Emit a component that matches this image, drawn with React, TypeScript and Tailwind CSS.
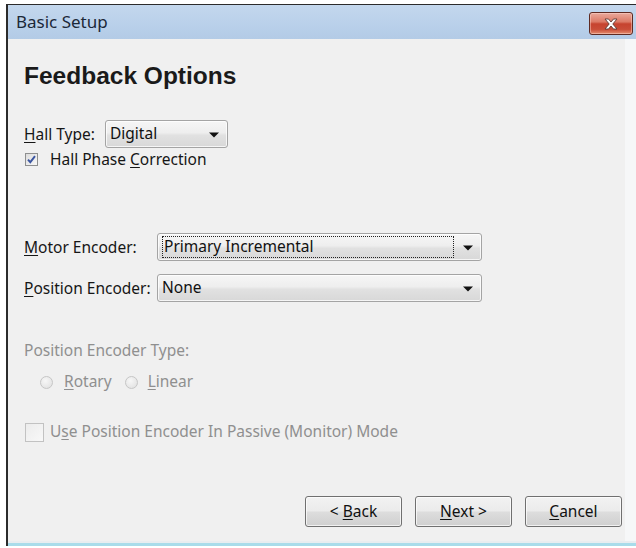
import React from "react";

const ui = "font-['Noto_Sans',sans-serif]";

function Key({ children }: { children: React.ReactNode }) {
  return <span className="underline decoration-1 underline-offset-[2px]">{children}</span>;
}

function DownArrow() {
  return (
    <svg width="10" height="6" viewBox="0 0 10 6" className="block">
      <path d="M0 0.5h10L5 5.5z" fill="#111" />
    </svg>
  );
}

function Combo({
  value,
  sizeClass,
  focused = false,
}: {
  value: string;
  sizeClass: string;
  focused?: boolean;
}) {
  return (
    <div
      className={`${sizeClass} h-[28px] shrink-0 flex items-stretch rounded-[3px] border border-[#a4a4a4] bg-[linear-gradient(#f6f6f6,#eeeeee_45%,#e1e1e1_55%,#d8d8d8)] shadow-[inset_0_0_0_1px_rgba(255,255,255,0.75)]`}
    >
      {focused ? (
        <div className="flex-1 my-[2px] ml-[4px] flex items-center border border-dotted border-[#222] pl-[1px] text-[15.5px] text-[#111]">
          {value}
        </div>
      ) : (
        <div className="flex-1 flex items-center pl-[4px] text-[15.5px] text-[#111]">{value}</div>
      )}
      <div className="w-[27px] flex items-center justify-center pt-[1px]">
        <DownArrow />
      </div>
    </div>
  );
}

function CheckBox({ checked, disabled, sizeClass }: { checked?: boolean; disabled?: boolean; sizeClass: string }) {
  return (
    <div
      className={`${sizeClass} shrink-0 flex items-center justify-center border ${
        disabled
          ? "border-[#c2c2c2] bg-[linear-gradient(135deg,#ececec,#f8f8f8)]"
          : "border-[#8e8f8f] bg-[linear-gradient(135deg,#dcdcdc,#f8f8f8)]"
      }`}
    >
      {checked && (
        <svg width="9" height="9" viewBox="0 0 9 9" className="block">
          <path d="M1 4.6l2.3 2.6L8 1.2" fill="none" stroke="#3a55a0" strokeWidth="1.9" />
        </svg>
      )}
    </div>
  );
}

function Radio() {
  return (
    <div className="w-[13px] h-[13px] shrink-0 rounded-full border border-[#c6c6c6] bg-[radial-gradient(circle_at_40%_35%,#f7f7f7,#dedede)]" />
  );
}

function WinButton({ children }: { children: React.ReactNode }) {
  return (
    <div className="w-[97px] h-[31px] flex items-center justify-center rounded-[3px] border border-[#707070] bg-[linear-gradient(#f2f2f2,#ebebeb_48%,#dddddd_52%,#cfcfcf)] shadow-[inset_0_0_0_1px_rgba(255,255,255,0.7)] text-[15.5px] text-[#111] whitespace-pre">
      {children}
    </div>
  );
}

function CloseButton() {
  return (
    <div className="w-[44px] h-[23px] flex items-center justify-center rounded-[3px] border border-[#5e2a22] bg-[linear-gradient(#eaa99c,#dc7a66_42%,#c6432f_52%,#c94d38_78%,#e58f70)] shadow-[inset_0_0_0_1px_rgba(255,220,210,0.45)]">
      <svg width="16" height="12" viewBox="0 0 16 12" className="block">
        <path
          d="M2 1h3.5L8 4l2.5-3H14l-4.2 5L14 11h-3.5L8 8l-2.5 3H2l4.2-5z"
          fill="#fff"
          stroke="#5b3b35"
          strokeWidth="0.9"
          strokeLinejoin="round"
        />
      </svg>
    </div>
  );
}

export default function App() {
  return (
    <div className={`w-[636px] h-[548px] bg-white pt-[4px] pl-[6px] pb-[2px] flex overflow-hidden ${ui}`}>
      <div className="flex-1 flex flex-col border-t border-l-2 border-[#2b2b2b]">
        {/* title bar */}
        <div className="h-[34px] shrink-0 flex items-start justify-between bg-[linear-gradient(#c3d7ed,#b9d0ea_60%,#b3cbe6)] pl-[8px] pr-[3px]">
          <span className="mt-[5px] text-[17px] leading-[24px] text-[#1b2838]">Basic Setup</span>
          <div className="mt-[7px]">
            <CloseButton />
          </div>
        </div>

        <div className="flex-1 flex min-h-0">
          {/* dialog body */}
          <div className="flex-1 flex flex-col bg-[#f0f0f0] pl-[16px] pr-[3px] pt-[23px] pb-[14px] text-[15.5px] text-[#161616]">
            <h1 className="font-['Liberation_Sans',Arial,sans-serif] font-bold text-[24.5px] leading-[28px] text-[#1a1a1a]">
              Feedback Options
            </h1>

            <div className="mt-[30px] flex items-center h-[28px]">
              <span className="w-[81px] leading-[20px]">
                <Key>H</Key>all Type:
              </span>
              <Combo value="Digital" sizeClass="w-[123px]" />
            </div>

            <div className="mt-[3px] flex items-center h-[16px] pl-[1px]">
              <CheckBox checked sizeClass="w-[13px] h-[13px]" />
              <span className="ml-[12px] leading-[20px]">
                Hall Phase <Key>C</Key>orrection
              </span>
            </div>

            <div className="mt-[66px] flex items-center h-[28px]">
              <span className="w-[133px] leading-[20px]">
                <Key>M</Key>otor Encoder:
              </span>
              <Combo value="Primary Incremental" sizeClass="w-[325px]" focused />
            </div>

            <div className="mt-[13px] flex items-center h-[28px]">
              <span className="w-[133px] leading-[20px]">
                <Key>P</Key>osition Encoder:
              </span>
              <Combo value="None" sizeClass="w-[325px]" />
            </div>

            <div className="mt-[38px] leading-[20px] text-[#8f8f8f]">Position Encoder Type:</div>

            <div className="mt-[12px] flex items-center h-[20px] pl-[16px] text-[#8f8f8f]">
              <Radio />
              <span className="ml-[11px]">
                <Key>R</Key>otary
              </span>
              <span className="ml-[13px]">
                <Radio />
              </span>
              <span className="ml-[10px]">
                <Key>L</Key>inear
              </span>
            </div>

            <div className="mt-[30px] flex items-center h-[20px] pl-[1px] text-[#8f8f8f]">
              <CheckBox disabled sizeClass="w-[19px] h-[19px]" />
              <span className="ml-[6px]">
                U<Key>s</Key>e Position Encoder In Passive (Monitor) Mode
              </span>
            </div>

            <div className="mt-auto flex justify-end gap-[13px]">
              <WinButton>
                {"< "}
                <Key>B</Key>
                {"ack"}
              </WinButton>
              <WinButton>
                <Key>N</Key>
                {"ext >"}
              </WinButton>
              <WinButton>
                <Key>C</Key>
                {"ancel"}
              </WinButton>
            </div>
          </div>
          <div className="w-[11px] bg-[#f6f7f8]" />
        </div>

        <div className="h-[2px] shrink-0 bg-[#e8edf0]" />
        <div className="h-[3px] shrink-0 bg-[#a9dcea]" />
      </div>
    </div>
  );
}
